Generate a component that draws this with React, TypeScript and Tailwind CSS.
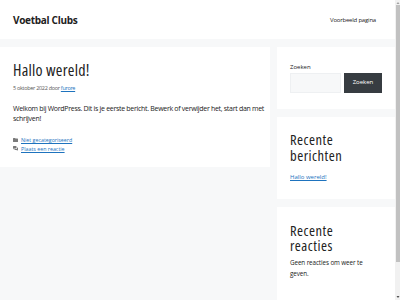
function FolderIcon() {
  return (
    <svg width="5" height="4" viewBox="0 0 10 8" className="shrink-0">
      <path d="M0 1 Q0 0 1 0 L4 0 L5 1 L9 1 Q10 1 10 2 L10 7 Q10 8 9 8 L1 8 Q0 8 0 7 Z" fill="#7a7a7a" />
    </svg>
  );
}

function CommentIcon() {
  return (
    <svg width="5" height="5" viewBox="0 0 10 10" className="shrink-0">
      <path d="M1 0 L6 0 Q7 0 7 1 L7 4 Q7 5 6 5 L3 5 L1 7 L1 5 Q0 5 0 4 L0 1 Q0 0 1 0 Z" fill="#7a7a7a" />
      <path d="M8 3 L9 3 Q10 3 10 4 L10 7 Q10 8 9 8 L9 10 L7 8 L4 8 Q3 8 3 7 L3 6 L7 6 Q8 6 8 5 Z" fill="#7a7a7a" />
    </svg>
  );
}

export default function App() {
  return (
    <div className="flex w-[400px] h-[300px] overflow-hidden font-['Open_Sans',sans-serif] text-[#222222]">
      <div className="flex flex-col w-[395px] h-[300px] bg-[#f7f8f9] overflow-hidden">
        <header className="shrink-0 flex items-center justify-between h-[39px] bg-white pl-[13px] pr-[19px]">
          <div className="text-[10px] font-bold leading-none tracking-[-0.3px] text-[#222222]">Voetbal Clubs</div>
          <div className="text-[6px] leading-none tracking-[-0.2px] text-[#222222]">Voorbeeld pagina</div>
        </header>

        <div className="shrink-0 flex gap-[7px] pt-[8px] items-start">
          <article className="shrink-0 w-[270px] bg-white pl-[13px] pr-[13px] pt-[12.5px] pb-[14px]">
            <h1 className="text-[16px] leading-[20px] font-normal font-stretch-condensed tracking-[0.25px]">Hallo wereld!</h1>
            <div className="mt-[4px] text-[5.5px] leading-[8px] tracking-[-0.3px] text-[#595959]">
              5 oktober 2022 door <span className="text-[#1e73be] underline">furore</span>
            </div>
            <p className="mt-[12.5px] text-[7px] leading-[10px] tracking-[-0.3px] whitespace-nowrap">
              Welkom bij WordPress. Dit is je eerste bericht. Bewerk of verwijder het, start dan met
              <br />
              schrijven!
            </p>
            <div className="mt-[12px] text-[5.3px] leading-[8.5px]">
              <div className="flex items-center gap-[3px]">
                <FolderIcon />
                <span className="text-[#1e73be] underline">Niet gecategoriseerd</span>
              </div>
              <div className="flex items-center gap-[3px]">
                <CommentIcon />
                <span className="text-[#1e73be] underline">Plaats een reactie</span>
              </div>
            </div>
          </article>

          <aside className="shrink-0 flex flex-col gap-[8px] w-[118px]">
            <div className="bg-white pl-[13px] pr-[13px] pt-[15.5px] pb-[16px]">
              <div className="text-[6px] leading-[8px] text-[#222222]">Zoeken</div>
              <div className="mt-[2px] flex gap-[3px] h-[20px]">
                <div className="flex-1 bg-[#f7f8f9] border border-[#eef0f2]" />
                <div className="w-[38px] bg-[#373c41] text-white text-[6px] flex items-center justify-center">Zoeken</div>
              </div>
            </div>

            <div className="bg-white pl-[13px] pr-[13px] pt-[15.5px] pb-[18px]">
              <h2 className="text-[14.5px] leading-[15.5px] font-normal font-stretch-condensed tracking-[0.5px]">
                Recente
                <br />
                berichten
              </h2>
              <div className="mt-[9.5px] text-[6px] leading-[8px] text-[#1e73be] underline">Hallo wereld!</div>
            </div>

            <div className="bg-white pl-[13px] pr-[13px] pt-[16px] pb-[40px]">
              <h2 className="text-[14.5px] leading-[15.5px] font-normal font-stretch-condensed tracking-[0.5px]">
                Recente
                <br />
                reacties
              </h2>
              <p className="mt-[3.2px] text-[6.3px] leading-[11.7px] tracking-[-0.1px] whitespace-nowrap">
                Geen reacties om weer te
                <br />
                geven.
              </p>
            </div>
          </aside>
        </div>
      </div>

      <div className="flex flex-col items-center w-[5px] h-[300px] bg-[#f1f1f1]">
        <svg width="4" height="4" viewBox="0 0 4 4" className="mt-[0.5px]">
          <path d="M2 1 L3.5 3 L0.5 3 Z" fill="#a0a0a0" />
        </svg>
        <div className="w-[4px] h-[257px] mt-[0.5px] bg-[#c1c1c1]" />
        <div className="flex-1" />
        <svg width="4" height="4" viewBox="0 0 4 4" className="mb-[1px]">
          <path d="M0.5 1 L3.5 1 L2 3 Z" fill="#505050" />
        </svg>
      </div>
    </div>
  );
}
